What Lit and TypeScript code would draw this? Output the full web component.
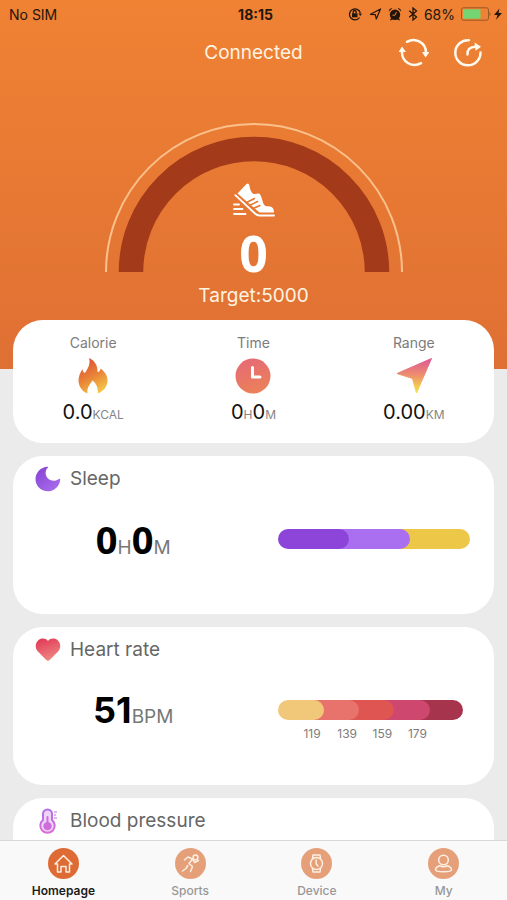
import { LitElement, html, svg, css, nothing, type TemplateResult } from "lit";
import { customElement, state } from "lit/decorators.js";

const flameIcon = html`<svg class="stat-icon" viewBox="0 0 36 36" aria-hidden="true">
  <defs>
    <linearGradient id="flame" x1="0.3" y1="0" x2="0.75" y2="1">
      <stop offset="0" stop-color="#de4f35" />
      <stop offset="0.5" stop-color="#e98438" />
      <stop offset="1" stop-color="#f3cc48" />
    </linearGradient>
  </defs>
  <path fill="url(#flame)" d="M14 0C19 2 23 7 22.500 14C24.500 14 25.500 12 25.500 10.500C30 14 33 18 32.500 23.500C32 29 28.500 33 23 35.500C23 30 21.500 25.500 17.500 22.500C15.500 26 11.500 29 12.500 35.500C7 33.500 3.500 28 3.500 22.500C3.500 18 5.500 14 7.500 11C7.500 13 8.500 14.500 10 15C12.500 11 16 6 14 0Z" />
</svg>`;

const clockIcon = html`<svg class="stat-icon" viewBox="0 0 36 36" aria-hidden="true">
  <defs>
    <linearGradient id="clock" x1="0.3" y1="0" x2="0.6" y2="1">
      <stop offset="0" stop-color="#e66a76" />
      <stop offset="1" stop-color="#eb8158" />
    </linearGradient>
  </defs>
  <circle cx="18" cy="18" r="17.500" fill="url(#clock)" />
  <path d="M17.500 9.500V19H25" fill="none" stroke="#fff" stroke-width="3" stroke-linecap="round" stroke-linejoin="round" />
</svg>`;

const arrowIcon = html`<svg class="stat-icon" viewBox="0 0 36 36" aria-hidden="true">
  <defs>
    <linearGradient id="arrow" x1="0" y1="0" x2="0" y2="1">
      <stop offset="0.05" stop-color="#de5c94" />
      <stop offset="0.45" stop-color="#ec8a70" />
      <stop offset="0.8" stop-color="#f4c84f" />
      <stop offset="1" stop-color="#f7e04a" />
    </linearGradient>
  </defs>
  <path fill="url(#arrow)" stroke="url(#arrow)" stroke-linejoin="round" d="M35.500 0.500L20.500 35L16.500 20.500L1 15.500Z" />
</svg>`;

const moonIcon = html`<svg class="card-icon" viewBox="0 0 26 26" aria-hidden="true">
  <defs>
    <linearGradient id="moon" x1="0" y1="0" x2="0.8" y2="1">
      <stop offset="0" stop-color="#8340d2" />
      <stop offset="1" stop-color="#a96eee" />
    </linearGradient>
  </defs>
  <path fill="url(#moon)" d="M12.500 0.700C13.300 0.700 13.200 1.200 12.700 1.700C10 4.500 10 9 12.500 12C15.500 15.500 20.500 15.500 24 13C24.800 12.500 25.300 12.800 25.200 13.700C24.500 20.500 19 25.300 12.800 25.300C6 25.300 0.500 19.800 0.500 13C0.500 6.500 5.800 1 12.500 0.700Z" />
</svg>`;

const heartIcon = html`<svg class="card-icon" viewBox="0 0 26 26" aria-hidden="true">
  <defs>
    <linearGradient id="heart" x1="0.3" y1="0" x2="0.7" y2="1">
      <stop offset="0" stop-color="#e33c58" />
      <stop offset="1" stop-color="#ee8c86" />
    </linearGradient>
  </defs>
  <path fill="url(#heart)" d="M13 4C15.500 1 20 0.800 22.900 3.500C26 6.500 26 11.200 23.300 14.200L15 22.800C13.700 24.200 12.300 24.200 11 22.800L2.700 14.200C0 11.200 0 6.500 3.100 3.500C6 0.800 10.500 1 13 4Z" />
</svg>`;

const thermometerIcon = html`<svg class="card-icon" viewBox="0 0 26 26" aria-hidden="true">
  <defs>
    <linearGradient id="thermo" x1="0" y1="0" x2="0" y2="1">
      <stop offset="0" stop-color="#b06ee8" />
      <stop offset="1" stop-color="#dc6cd6" />
    </linearGradient>
  </defs>
  <path fill="#eed5f7" stroke="url(#thermo)" stroke-width="2" d="M8 12V6A4.500 4.500 0 0 1 17 6V12A7.200 7.200 0 1 1 8 12Z" />
  <path fill="#cf6cdc" d="M11.500 9a1 1 0 0 1 2 0V14A4.200 4.200 0 1 1 11.500 14Z" />
  <path stroke="#c06ce0" stroke-width="1" fill="none" d="M19 4h3M19 7h2M19 10h3" />
</svg>`;

const tabIcons: Record<string, TemplateResult> = {
  home: svg`<path d="M7 16L15.500 7.500L24 16H21.500V24H18V18.500H13V24H9.500V16Z" />`,
  sports: svg`
    <circle cx="20.500" cy="9.500" r="2.400" />
    <path d="M9.500 12L13 9L17.500 11L14 15.500L17.500 18.500L15.500 23.500M12.800 17.500L11 20.500L7.500 23M17.500 11L19.500 14.500L23.500 12.500" />`,
  device: svg`
    <circle cx="15.500" cy="15.500" r="6" />
    <path d="M11.500 10.500L12 7H19L19.500 10.500M11.500 20.500L12 24H19L19.500 20.500M15.200 12V16L17 18" />`,
  my: svg`
    <circle cx="15.500" cy="12" r="4.800" />
    <path d="M11.500 17.800C9 18.800 7.500 20.300 7.500 21.800C7.500 23.300 9.500 23.800 15.500 23.800S23.500 23.300 23.500 21.800C23.500 20.300 22 18.800 19.500 17.800C17 19 14 19 11.500 17.800Z" />`,
};

interface Segment {
  color: string;
  end: number;
}

const sleepSegments: Segment[] = [
  { color: "#8d45d9", end: 37 },
  { color: "#aa6ff0", end: 69 },
  { color: "#edc748", end: 100 },
];

const heartSegments: Segment[] = [
  { color: "#f1c87a", end: 25 },
  { color: "#e8736c", end: 44 },
  { color: "#df5551", end: 63 },
  { color: "#cd476e", end: 82 },
  { color: "#a6344c", end: 100 },
];

/** Share of the bar that a segment reaches back under the one before it. */
const overlap = 10;

const tabs = [
  { id: "home", label: "Homepage" },
  { id: "sports", label: "Sports" },
  { id: "device", label: "Device" },
  { id: "my", label: "My" },
];

/** Pill-shaped bar whose coloured stretches overlap from left to right. */
@customElement("segment-bar")
export class SegmentBar extends LitElement {
  static properties = { segments: { attribute: false } };
  declare segments: Segment[];

  static styles = css`
    :host {
      display: grid;
      height: 20px;
    }
    .segment {
      grid-area: 1 / 1;
      border-radius: 0 10px 10px 0;
    }
    .segment:last-child {
      border-radius: 10px;
    }
  `;

  render() {
    const list = this.segments ?? [];
    return list
      .map((s, i) => {
        const start = i === 0 ? 0 : list[i - 1].end - overlap;
        return html`<div
          class="segment"
          style="margin-left:${start}%;width:${s.end - start}%;background:${s.color}"
        ></div>`;
      })
      .reverse();
  }
}

@customElement("app-root")
export class AppRoot extends LitElement {
  @state() private activeTab = "home";

  static styles = css`
    :host {
      display: flex;
      flex-direction: column;
      height: 100vh;
      background: #ebebeb;
      font-family: Inter, "Liberation Sans", sans-serif;
      color: #666;
    }
    * {
      box-sizing: border-box;
    }
    h1, h2, p, dl, dd {
      margin: 0;
      font-weight: 400;
    }
    .scroll {
      flex: 1;
      min-height: 0;
      overflow-y: auto;
      scrollbar-width: none;
    }
    .hero {
      background: linear-gradient(#ef8233, #df7034);
      color: #fff3e2;
      padding-bottom: 61px;
    }
    .status {
      display: grid;
      grid-template-columns: 1fr auto 1fr;
      align-items: center;
      height: 28px;
      padding: 0 5px 0 9px;
      font-size: 14px;
      color: #24150b;
    }
    .clock {
      font-weight: 700;
    }
    .indicators {
      display: flex;
      justify-content: flex-end;
      align-items: center;
      gap: 6px;
    }
    .indicators svg {
      display: block;
      height: 14px;
    }
    .battery {
      display: flex;
      align-items: center;
      gap: 3px;
    }
    .title-row {
      display: grid;
      grid-template-columns: 1fr auto 1fr;
      align-items: center;
      height: 50px;
      padding: 0 24px;
    }
    .title {
      grid-column: 2;
      font-size: 19px;
      line-height: 24px;
    }
    .actions {
      display: flex;
      justify-content: flex-end;
      gap: 24px;
    }
    .action {
      width: 30px;
      height: 30px;
      padding: 0;
      border: 0;
      background: none;
      color: #fffaf0;
      cursor: pointer;
    }
    .action svg {
      display: block;
    }
    .gauge {
      display: grid;
      justify-items: center;
      margin-top: 45px;
    }
    .arc,
    .reading {
      grid-area: 1 / 1;
    }
    .arc {
      width: 298px;
      height: 149px;
    }
    .reading {
      display: flex;
      flex-direction: column;
      align-items: center;
      padding-top: 60px;
      color: #fff;
    }
    .steps {
      height: 54px;
      font: 700 50px/70px "Noto Sans", sans-serif;
    }
    .target {
      margin-top: 12px;
      font-size: 19px;
      line-height: 24px;
      text-align: center;
    }
    .cards {
      display: flex;
      flex-direction: column;
      gap: 13px;
      margin-top: -49px;
      padding: 0 13px 13px;
    }
    .card {
      min-height: 158px;
      border-radius: 30px;
      background: #fff;
    }
    .stats {
      display: grid;
      grid-template-columns: repeat(3, 1fr);
      padding: 14px 0 16px;
      border-radius: 30px;
      background: #fff;
    }
    .stat {
      display: flex;
      flex-direction: column;
      align-items: center;
      gap: 6px;
    }
    .stat dt {
      font-size: 14px;
      line-height: 18px;
      color: #7c7c7c;
    }
    .stat-icon {
      display: block;
      width: 36px;
      height: 36px;
    }
    .stat-value {
      font-size: 20px;
      line-height: 24px;
      color: #111;
    }
    .stat-value small {
      font-size: 12px;
      color: #858585;
    }
    .card-head {
      display: flex;
      align-items: center;
      gap: 9px;
      padding: 10px 22px 0;
    }
    .card-icon {
      width: 26px;
      height: 26px;
    }
    .card-title {
      font-size: 19px;
      line-height: 26px;
    }
    .card-body {
      display: grid;
      grid-template-columns: 1fr 1fr;
      padding-top: 23px;
    }
    .big {
      font: 700 38px/48px "Noto Sans", sans-serif;
      color: #000;
      text-align: center;
    }
    .big.heart {
      font: 700 36px/48px Inter, sans-serif;
    }
    .big small {
      font: 400 19px/24px Inter, sans-serif;
      color: #777;
    }
    .chart {
      padding: 14px 24px 0;
    }
    .chart.heart {
      padding-right: 31px;
    }
    .zones {
      display: grid;
      grid-template-columns: repeat(4, 1fr);
      padding: 5px 28px 0 17px;
      font-size: 12px;
      line-height: 18px;
      text-align: center;
      color: #7c7c7c;
    }
    .tabs {
      display: grid;
      grid-template-columns: repeat(4, 1fr);
      border-top: 1px solid #d8d8d8;
      background: #f9f9f9;
    }
    .tab {
      display: flex;
      flex-direction: column;
      align-items: center;
      gap: 4px;
      padding: 7px 0 1px;
      font-size: 12px;
      line-height: 16px;
      font-weight: 500;
      color: #979797;
      text-decoration: none;
    }
    .tab svg {
      width: 31px;
      height: 31px;
      border-radius: 50%;
      background: #e5a07a;
      fill: none;
      stroke: #fdeee2;
      stroke-width: 1.5;
      stroke-linejoin: round;
      stroke-linecap: round;
    }
    .tab.active {
      color: #1c1c1c;
      font-weight: 600;
    }
    .tab.active svg {
      background: #de6b34;
    }
  `;

  private stat(label: string, icon: TemplateResult, value: TemplateResult) {
    return html`<div class="stat">
      <dt>${label}</dt>
      ${icon}
      <dd class="stat-value">${value}</dd>
    </div>`;
  }

  private card(title: string, icon: TemplateResult, body: TemplateResult | typeof nothing) {
    return html`<section class="card">
      <div class="card-head">${icon}<h2 class="card-title">${title}</h2></div>
      <div class="card-body">${body}</div>
    </section>`;
  }

  private statusBar() {
    return html`<div class="status">
      <span>No SIM</span>
      <span class="clock">18:15</span>
      <div class="indicators">
        <svg width="14" viewBox="0 0 14 14" fill="none" stroke="#24150b" stroke-width="1.300">
          <path d="M11.500 10.500A5.500 5.500 0 1 1 12.300 6" />
          <path d="M10.300 6.500H14L12.300 9Z" fill="#24150b" stroke="none" />
          <rect x="4" y="6.300" width="5.500" height="4" fill="#24150b" stroke="none" />
          <path d="M5.200 6.500V5a1.500 1.500 0 0 1 3 0V6.500" />
        </svg>
        <svg width="14" viewBox="0 0 14 14" fill="none" stroke="#24150b" stroke-width="1.200" stroke-linejoin="round">
          <path d="M12.500 2L8.300 12L7.300 7.700L2.500 7.300Z" />
        </svg>
        <svg width="14" viewBox="0 0 14 14" fill="#24150b">
          <circle cx="7" cy="7.800" r="5.200" />
          <path d="M0.800 4.500A3 3 0 0 1 4.500 1.300ZM13.200 4.500A3 3 0 0 0 9.500 1.300ZM3 11L2 13.500L5 12.500ZM11 11L12 13.500L9 12.500Z" />
          <path d="M8.500 5L7 8.200H4.500" fill="none" stroke="#ef8233" />
        </svg>
        <svg width="10" viewBox="0 0 10 14" fill="none" stroke="#24150b" stroke-width="1.300">
          <path d="M1.200 3.800L8.500 10L5 13V1L8.500 4L1.200 10.200" />
        </svg>
        <span>68%</span>
        <div class="battery">
          <svg width="30" viewBox="0 0 30 14">
            <rect x="0.500" y="0.800" width="27" height="12.400" rx="2" fill="none" stroke="#9a5826" />
            <rect x="2" y="2.300" width="17.500" height="9.400" fill="#74d572" />
            <path d="M28.500 5V9C30 8.500 30 5.500 28.500 5Z" fill="#9a5826" />
          </svg>
          <svg width="8" viewBox="0 0 8 14" fill="#24150b">
            <path d="M5.500 1.500L0 8H3.500L2 12.800L8 6H4.500Z" />
          </svg>
        </div>
      </div>
    </div>`;
  }

  render() {
    return html`
      <main class="scroll">
        <header class="hero">
          ${this.statusBar()}
          <div class="title-row">
            <h1 class="title">Connected</h1>
            <div class="actions">
              <button class="action" aria-label="Sync">
                <svg width="30" height="30" viewBox="0 0 30 30" fill="none" stroke="currentColor" stroke-width="2.500" stroke-linecap="round">
                  <path d="M8 3.800A12.600 12.600 0 0 1 27 14.500" />
                  <path d="M22 25.200A12.600 12.600 0 0 1 3 14" />
                  <path d="M23 14H30.500L26.500 19.500ZM-0.500 14H7L3 8.500Z" fill="currentColor" stroke="none" />
                </svg>
              </button>
              <button class="action" aria-label="Share">
                <svg width="30" height="30" viewBox="0 0 30 30" fill="none" stroke="currentColor" stroke-width="2.500" stroke-linecap="round">
                  <path d="M16 2.200A12.600 12.600 0 1 0 27.500 14.500" />
                  <path d="M14.500 16.500C14 12 17 8.800 22 8.800" />
                  <path d="M21.500 4.500L28 8.800L22.500 12.800Z" fill="currentColor" stroke="none" />
                </svg>
              </button>
            </div>
          </div>
          <div class="gauge">
            <svg class="arc" viewBox="0 0 298 149" fill="none" aria-hidden="true">
              <path d="M1 149A148 148 0 0 1 297 149" stroke="#fbc08c" stroke-width="2" />
              <path d="M26 149A123 123 0 0 1 272 149" stroke="#a33a1a" stroke-width="24.500" />
            </svg>
            <div class="reading">
              <svg width="42" height="35" viewBox="0 0 42 35" aria-hidden="true">
                <path fill="#fff" d="M13.500 1Q15.500 -0.500 16.300 2C17 6.500 18.500 10.500 21 11C23 11.300 25 10 26.500 10.800C29.500 14 29 21 32.500 23C36 23.500 41 22.500 41 29.500H26.500L4.500 10.500Z" />
                <path fill="none" stroke="#fff" stroke-width="1.800" stroke-linecap="round" stroke-linejoin="round" d="M2.300 12.200L22 30.500Q24 32.500 26.500 32.500H41M1 21.500H6M1 26H9.500M1 31H12.500" />
                <path fill="none" stroke="#e4762f" stroke-width="1.500" stroke-linecap="round" d="M14.500 19L21.500 15.500M17.500 22L24.500 18.500M20.500 25.300L27 22.500" />
              </svg>
              <div class="steps">0</div>
            </div>
          </div>
          <p class="target">Target:5000</p>
        </header>
        <div class="cards">
          <dl class="stats">
            ${this.stat("Calorie", flameIcon, html`0.0<small>KCAL</small>`)}
            ${this.stat("Time", clockIcon, html`0<small>H</small>0<small>M</small>`)}
            ${this.stat("Range", arrowIcon, html`0.00<small>KM</small>`)}
          </dl>
          ${this.card("Sleep", moonIcon, html`
            <p class="big">0<small>H</small>0<small>M</small></p>
            <div class="chart"><segment-bar .segments=${sleepSegments}></segment-bar></div>`)}
          ${this.card("Heart rate", heartIcon, html`
            <p class="big heart">51<small>BPM</small></p>
            <div class="chart heart">
              <segment-bar .segments=${heartSegments}></segment-bar>
              <div class="zones"><span>119</span><span>139</span><span>159</span><span>179</span></div>
            </div>`)}
          ${this.card("Blood pressure", thermometerIcon, nothing)}
        </div>
      </main>
      <nav class="tabs">
        ${tabs.map((t) => html`<a
          class="tab ${t.id === this.activeTab ? "active" : ""}"
          href="#${t.id}"
          @click=${() => (this.activeTab = t.id)}
        ><svg viewBox="0 0 31 31" aria-hidden="true">${tabIcons[t.id]}</svg>${t.label}</a>`)}
      </nav>
    `;
  }
}
